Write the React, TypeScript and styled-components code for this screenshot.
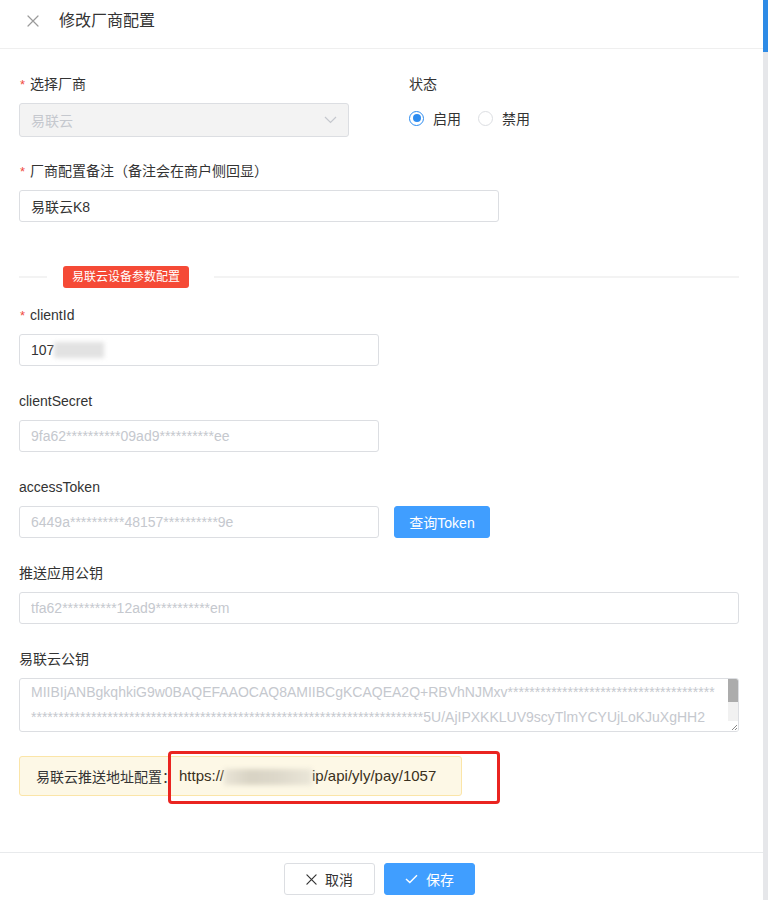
import React from 'react';
import styled, { createGlobalStyle } from 'styled-components';

const GlobalStyle = createGlobalStyle`
  html, body {
    margin: 0;
    padding: 0;
    background: #ffffff;
  }
  body {
    font-family: "Liberation Sans", "Noto Sans CJK SC", sans-serif;
    color: #333333;
    font-size: 14px;
  }
  *, *::before, *::after {
    box-sizing: border-box;
  }
`;

const Shell = styled.div`
  display: flex;
  width: 768px;
  height: 900px;
  overflow: hidden;
`;

const Dialog = styled.div`
  flex: 1;
  min-width: 0;
  display: flex;
  flex-direction: column;
  background: #ffffff;
`;

const ScrollTrack = styled.div`
  width: 5px;
  background: #e6e7ea;
`;

const ScrollThumb = styled.div`
  height: 52px;
  background: #2e8be6;
`;

const Header = styled.div`
  height: 49px;
  border-bottom: 1px solid #efefef;
  display: flex;
  align-items: flex-start;
  padding: 10px 0 0 27px;
  gap: 20px;
`;

const CloseButton = styled.button`
  width: 12px;
  height: 22px;
  padding: 0;
  border: none;
  background: transparent;
  display: flex;
  align-items: center;
  cursor: pointer;
`;

const Title = styled.h2`
  margin: 0;
  font-size: 16px;
  font-weight: 400;
  line-height: 22px;
  color: #333333;
`;

const Body = styled.div`
  flex: 1;
  overflow: hidden;
  padding: 25px 24px 0 19px;
`;

const FieldRow = styled.div`
  display: flex;
  gap: 60px;
`;

const Field = styled.div<{ $width?: number; $gap?: number }>`
  width: ${(p) => (p.$width ? `${p.$width}px` : 'auto')};
  flex: ${(p) => (p.$width ? 'none' : '1')};
  margin-bottom: ${(p) => p.$gap ?? 25}px;
`;

const Label = styled.div`
  height: 20px;
  line-height: 20px;
  font-size: 14px;
  color: #333333;
  margin-bottom: 9px;
  white-space: nowrap;
`;

const Required = styled.span`
  color: #f04b43;
  margin: 0 5px 0 1px;
  font-size: 13px;
`;

const InputLine = styled.div`
  display: flex;
  align-items: center;
  gap: 15px;
`;

const TextInput = styled.input<{ $width?: number }>`
  width: ${(p) => (p.$width ? `${p.$width}px` : '100%')};
  height: 32px;
  border: 1px solid #dcdee2;
  border-radius: 3px;
  padding: 0 11px;
  font-family: inherit;
  font-size: 14px;
  color: #333333;
  background: #ffffff;
  outline: none;
  &::placeholder {
    color: #c5c8ce;
  }
`;

const MaskedBox = styled.div<{ $width: number }>`
  width: ${(p) => p.$width}px;
  height: 32px;
  border: 1px solid #dcdee2;
  border-radius: 3px;
  padding: 0 11px;
  display: flex;
  align-items: center;
  font-size: 14px;
  color: #333333;
`;

const Smudge = styled.span<{ $w: number; $h: number; $tone: string }>`
  display: inline-block;
  width: ${(p) => p.$w}px;
  height: ${(p) => p.$h}px;
  background: ${(p) => p.$tone};
  filter: blur(2px);
  vertical-align: middle;
`;

const SelectBox = styled.div`
  width: 330px;
  height: 34px;
  border: 1px solid #dcdee2;
  border-radius: 3px;
  background: #f3f3f3;
  padding: 0 11px;
  display: flex;
  align-items: center;
  justify-content: space-between;
  color: #c5c8ce;
  font-size: 14px;
  cursor: not-allowed;
`;

const RadioGroup = styled.div`
  height: 30px;
  display: flex;
  align-items: center;
  gap: 17px;
`;

const RadioItem = styled.label`
  display: flex;
  align-items: center;
  gap: 9px;
  font-size: 14px;
  color: #333333;
  cursor: pointer;
`;

const RadioDot = styled.span<{ $checked?: boolean }>`
  width: 15px;
  height: 15px;
  border-radius: 50%;
  border: 1px solid ${(p) => (p.$checked ? '#2d8cf0' : '#dcdee2')};
  display: flex;
  align-items: center;
  justify-content: center;
  &::after {
    content: '';
    width: 8px;
    height: 8px;
    border-radius: 50%;
    background: ${(p) => (p.$checked ? '#2d8cf0' : 'transparent')};
  }
`;

const Divider = styled.div`
  display: flex;
  align-items: center;
  padding: 20px 0 17px;
`;

const DividerLine = styled.div<{ $grow?: boolean }>`
  height: 2px;
  background: #f3f3f3;
  width: ${(p) => (p.$grow ? 'auto' : '28px')};
  flex: ${(p) => (p.$grow ? '1' : 'none')};
`;

const SectionTag = styled.span`
  margin: 0 25px 0 16px;
  height: 22px;
  line-height: 22px;
  padding: 0 9px;
  border-radius: 3px;
  background: #f54a36;
  color: #ffffff;
  font-size: 12px;
`;

const PrimaryButton = styled.button<{ $width: number }>`
  width: ${(p) => p.$width}px;
  height: 32px;
  border: 1px solid #409eff;
  border-radius: 3px;
  background: #409eff;
  color: #ffffff;
  font-family: inherit;
  font-size: 14px;
  display: flex;
  align-items: center;
  justify-content: center;
  gap: 8px;
  cursor: pointer;
`;

const DefaultButton = styled.button`
  width: 91px;
  height: 32px;
  border: 1px solid #dcdee2;
  border-radius: 3px;
  background: #ffffff;
  color: #333333;
  font-family: inherit;
  font-size: 14px;
  display: flex;
  align-items: center;
  justify-content: center;
  gap: 8px;
  cursor: pointer;
`;

/* Textarea frame with its own drawn scroll rail and resize grip */
const KeyFrame = styled.div`
  display: flex;
  height: 54px;
  border: 1px solid #dcdee2;
  border-radius: 3px;
  overflow: hidden;
`;

const KeyArea = styled.textarea`
  flex: 1;
  min-width: 0;
  height: 100%;
  border: none;
  padding: 1px 11px 0 11px;
  font-family: inherit;
  font-size: 14px;
  line-height: 25px;
  color: #c5c8ce;
  background: transparent;
  word-break: break-all;
  overflow: hidden;
  resize: none;
  outline: none;
`;

const KeyRail = styled.div`
  width: 10px;
  display: flex;
  flex-direction: column;
  background: #f1f1f1;
`;

const KeyThumb = styled.div`
  height: 23px;
  background: #acacac;
`;

const KeyGrip = styled.div`
  margin-top: auto;
  height: 10px;
  background: #ffffff;
  display: flex;
  align-items: flex-end;
  justify-content: flex-end;
`;

const NoticeWrap = styled.div`
  position: relative;
  width: 443px;
`;

const Notice = styled.div`
  height: 40px;
  border: 1px solid #fbe5a8;
  border-radius: 3px;
  background: #fdf8e6;
  display: flex;
  align-items: center;
  padding-left: 16px;
  font-size: 14px;
  color: #333333;
  white-space: nowrap;
`;

const UrlText = styled.span`
  margin-left: 3px;
  font-size: 15px;
  color: #3a3020;
`;

const HiddenPart = styled.span`
  display: inline-block;
  width: 88px;
  height: 16px;
  vertical-align: middle;
  background: linear-gradient(90deg, #e9e4d6 0%, #d8d3c4 30%, #ddd8ca 60%, #eae6d8 100%);
  filter: blur(2.5px);
`;

const Highlight = styled.div`
  position: absolute;
  left: 149px;
  top: -5px;
  width: 332px;
  height: 53px;
  border: 3px solid #ea2420;
  border-radius: 4px;
  pointer-events: none;
`;

const Footer = styled.div`
  height: 48px;
  border-top: 1px solid #e8eaec;
  display: flex;
  justify-content: center;
  align-items: flex-start;
  gap: 9px;
  padding: 10px 4px 0 0;
`;

const CloseIcon = ({ size, color, width = 1.3 }: { size: number; color: string; width?: number }) => (
  <svg width={size} height={size} viewBox="0 0 12 12" fill="none">
    <path d="M1 1 L11 11 M11 1 L1 11" stroke={color} strokeWidth={width} strokeLinecap="round" />
  </svg>
);

const ChevronDown = () => (
  <svg width="13" height="8" viewBox="0 0 13 8" fill="none">
    <path d="M1 1 L6.5 6.5 L12 1" stroke="#c5c8ce" strokeWidth="1.2" />
  </svg>
);

const CheckIcon = () => (
  <svg width="13" height="10" viewBox="0 0 13 10" fill="none">
    <path d="M1 5 L4.8 8.6 L12 1.2" stroke="#ffffff" strokeWidth="1.4" />
  </svg>
);

const GripIcon = () => (
  <svg width="8" height="8" viewBox="0 0 8 8" fill="none">
    <path d="M7 2 L2 7 M7 5 L5 7" stroke="#8a8a8a" strokeWidth="1" />
  </svg>
);

const publicKey =
  'MIIBIjANBgkqhkiG9w0BAQEFAAOCAQ8AMIIBCgKCAQEA2Q+RBVhNJMxv' +
  '*'.repeat(110) +
  '5U/AjIPXKKLUV9scyTlmYCYUjLoKJuXgHH2\n' +
  '*'.repeat(60) +
  'wIDAQAB';

export default function App() {
  return (
    <>
      <GlobalStyle />
      <Shell>
        <Dialog>
          <Header>
            <CloseButton aria-label="关闭">
              <CloseIcon size={12} color="#9a9a9a" width={1.2} />
            </CloseButton>
            <Title>修改厂商配置</Title>
          </Header>

          <Body>
            <FieldRow>
              <Field $width={330} $gap={24}>
                <Label>
                  <Required>*</Required>选择厂商
                </Label>
                <SelectBox>
                  <span>易联云</span>
                  <ChevronDown />
                </SelectBox>
              </Field>
              <Field $gap={24}>
                <Label>状态</Label>
                <RadioGroup>
                  <RadioItem>
                    <RadioDot $checked />
                    启用
                  </RadioItem>
                  <RadioItem>
                    <RadioDot />
                    禁用
                  </RadioItem>
                </RadioGroup>
              </Field>
            </FieldRow>

            <Field $width={480} $gap={24}>
              <Label>
                <Required>*</Required>厂商配置备注（备注会在商户侧回显）
              </Label>
              <TextInput $width={480} defaultValue="易联云K8" />
            </Field>

            <Divider>
              <DividerLine />
              <SectionTag>易联云设备参数配置</SectionTag>
              <DividerLine $grow />
            </Divider>

            <Field>
              <Label>
                <Required>*</Required>clientId
              </Label>
              <MaskedBox $width={360}>
                107<Smudge $w={50} $h={16} $tone="#e2e2e2" />
              </MaskedBox>
            </Field>

            <Field>
              <Label>clientSecret</Label>
              <TextInput $width={360} placeholder="9fa62**********09ad9**********ee" />
            </Field>

            <Field>
              <Label>accessToken</Label>
              <InputLine>
                <TextInput $width={360} placeholder="6449a**********48157**********9e" />
                <PrimaryButton $width={96}>查询Token</PrimaryButton>
              </InputLine>
            </Field>

            <Field>
              <Label>推送应用公钥</Label>
              <TextInput placeholder="tfa62**********12ad9**********em" />
            </Field>

            <Field $gap={24}>
              <Label>易联云公钥</Label>
              <KeyFrame>
                <KeyArea readOnly value={publicKey} />
                <KeyRail>
                  <KeyThumb />
                  <KeyGrip>
                    <GripIcon />
                  </KeyGrip>
                </KeyRail>
              </KeyFrame>
            </Field>

            <NoticeWrap>
              <Notice>
                易联云推送地址配置：
                <UrlText>
                  https://<HiddenPart />ip/api/yly/pay/1057
                </UrlText>
              </Notice>
              <Highlight />
            </NoticeWrap>
          </Body>

          <Footer>
            <DefaultButton>
              <CloseIcon size={11} color="#333333" width={1.3} />
              取消
            </DefaultButton>
            <PrimaryButton $width={91}>
              <CheckIcon />
              保存
            </PrimaryButton>
          </Footer>
        </Dialog>
        <ScrollTrack>
          <ScrollThumb />
        </ScrollTrack>
      </Shell>
    </>
  );
}
